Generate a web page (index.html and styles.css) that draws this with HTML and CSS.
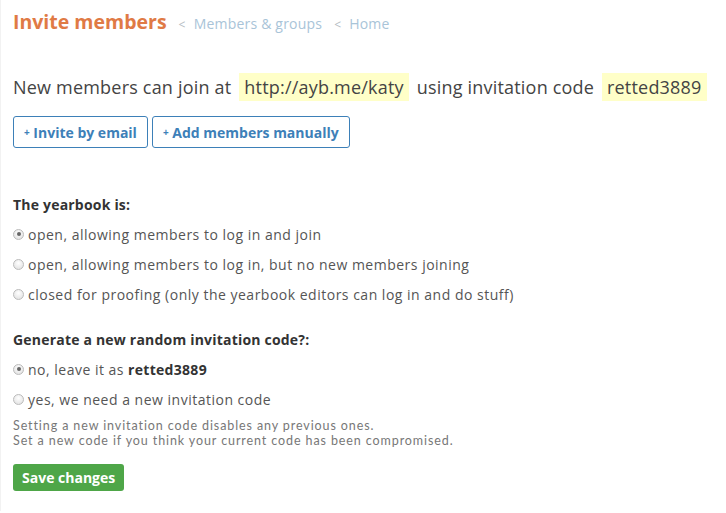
FILE: index.html
```html
<!DOCTYPE html>
<html>
<head>
<meta charset="utf-8">
<link rel="stylesheet" href="styles.css">
</head>
<body>
<div class="page">
  <header class="head">
    <h1 class="title">Invite members</h1>
    <nav class="crumbs">
      <span class="sep">&lt;</span><a class="crumb">Members &amp; groups</a>
      <span class="sep">&lt;</span><a class="crumb">Home</a>
    </nav>
  </header>

  <p class="join">New members can join at <span class="hl">http://ayb.me/katy</span> using invitation code <span class="hl">retted3889</span></p>

  <div class="actions">
    <button class="btn-outline"><span class="plus">+</span> Invite by email</button>
    <button class="btn-outline"><span class="plus">+</span> Add members manually</button>
  </div>

  <section class="group first">
    <h2 class="label">The yearbook is:</h2>
    <label class="opt"><span class="radio on"></span>open, allowing members to log in and join</label>
    <label class="opt"><span class="radio"></span>open, allowing members to log in, but no new members joining</label>
    <label class="opt"><span class="radio"></span>closed for proofing (only the yearbook editors can log in and do stuff)</label>
  </section>

  <section class="group">
    <h2 class="label">Generate a new random invitation code?:</h2>
    <label class="opt"><span class="radio on"></span>no, leave it as <b>retted3889</b></label>
    <label class="opt"><span class="radio"></span>yes, we need a new invitation code</label>
    <div class="hint">
      <span class="hint-line">Setting a new invitation code disables any previous ones.</span>
      <span class="hint-line">Set a new code if you think your current code has been compromised.</span>
    </div>
  </section>

  <button class="btn-save">Save changes</button>
</div>
</body>
</html>
```

FILE: styles.css
```css
html, body {
  margin: 0;
  padding: 0;
  background: #fff;
}
body {
  font-family: "Open Sans", "Liberation Sans", sans-serif;
  color: #555;
}
.page {
  padding: 8px 12px 20px 12px;
  border-left: 1px solid #f2f2f2;
}
.head {
  display: flex;
  align-items: baseline;
  gap: 12px;
  height: 30px;
}
.title {
  margin: 0;
  font-size: 19.5px;
  font-weight: 700;
  color: #e07a45;
}
.crumbs {
  display: flex;
  align-items: baseline;
  gap: 8px;
  font-size: 14px;
  color: #a5c2d6;
  letter-spacing: 0.2px;
}
.crumbs .sep { color: #b5bcc2; font-size: 12px; }
.crumbs .crumb { color: #a9c4d8; margin-right: 4px; }
.join {
  margin: 36px 0 0 0;
  font-size: 18px;
  font-weight: 400;
  color: #444;
  line-height: 26px;
  letter-spacing: 0.2px;
}
.hl {
  background: #ffffc8;
  padding: 2px 5px;
  margin: 0 3px;
}
.actions {
  display: flex;
  gap: 4px;
  margin-top: 16px;
}
.btn-outline {
  font-family: inherit;
  font-size: 14px;
  font-weight: 700;
  color: #3d80b8;
  background: #fff;
  border: 1px solid #3d80b8;
  border-radius: 3px;
  height: 32px;
  padding: 0 10px;
}
.plus { font-size: 10px; vertical-align: 2px; }
.group.first { margin-top: 47px; }
.group { margin-top: 21px; }
.label {
  margin: 0 0 4px 0;
  font-size: 14px;
  font-weight: 700;
  color: #333;
  line-height: 20px;
  letter-spacing: 0.2px;
}
.opt {
  display: flex;
  align-items: center;
  height: 30px;
  font-size: 14px;
  color: #555;
  letter-spacing: 0.5px;
}
.opt b { color: #333; margin-left: 4px; letter-spacing: 0.3px; }
.radio {
  flex: none;
  width: 11px;
  height: 11px;
  border-radius: 50%;
  border: 1px solid #bbb;
  background: radial-gradient(circle at 50% 35%, #fff, #ddd);
  margin-right: 4px;
  box-sizing: border-box;
  position: relative;
}
.radio.on::after {
  content: "";
  position: absolute;
  left: 2.5px; top: 2.5px;
  width: 4px; height: 4px;
  border-radius: 50%;
  background: #666;
}
.hint {
  margin-top: 4px;
  display: flex;
  flex-direction: column;
  font-family: Lato, "Open Sans", sans-serif;
  font-size: 12.5px;
  color: #777;
  letter-spacing: 0.9px;
}
.hint-line {
  display: block;
  height: 15px;
  line-height: 15px;
}
.btn-save {
  margin-top: 16px;
  font-family: inherit;
  font-size: 14px;
  font-weight: 700;
  color: #fff;
  background: #4ea648;
  border: 0;
  border-radius: 3px;
  height: 27px;
  padding: 0 9px;
}
```
